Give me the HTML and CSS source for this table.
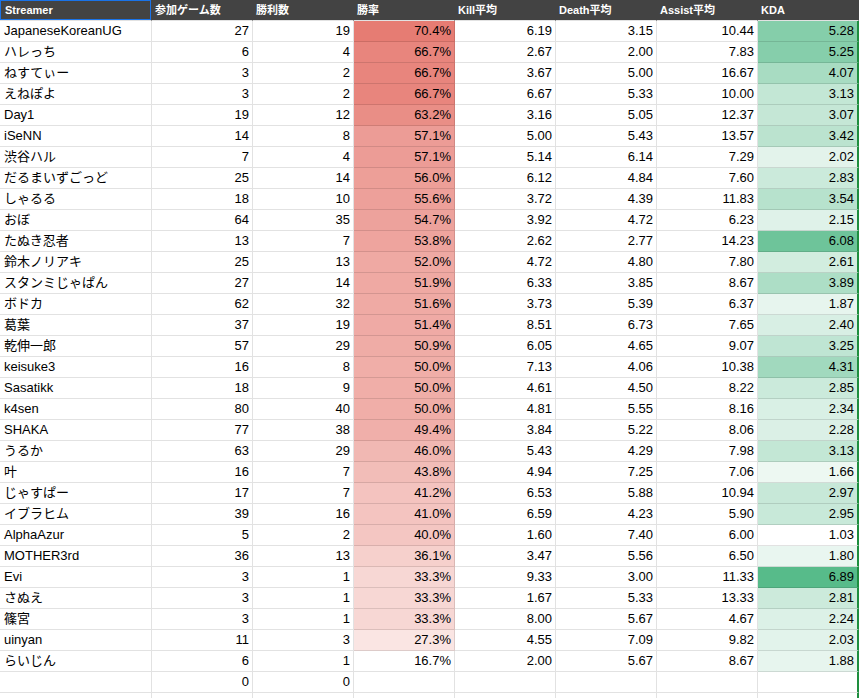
FILE: index.html
```html
<!DOCTYPE html>
<html lang="ja">
<head>
<meta charset="utf-8">
<title>Streamer stats</title>
<link rel="stylesheet" href="styles.css">
</head>
<body>
<div class="sheet">
  <div class="row head">
    <div class="c t sel">Streamer</div>
    <div class="c t">参加ゲーム数</div>
    <div class="c t">勝利数</div>
    <div class="c t">勝率</div>
    <div class="c t">Kill平均</div>
    <div class="c t">Death平均</div>
    <div class="c t">Assist平均</div>
    <div class="c t last">KDA</div>
  </div>
  <div class="row"><div class="c t">JapaneseKoreanUG</div><div class="c">27</div><div class="c">19</div><div class="c" style="background:rgb(230,124,115)">70.4%</div><div class="c">6.19</div><div class="c">3.15</div><div class="c">10.44</div><div class="c last" style="background:rgb(133,206,170)">5.28</div></div>
  <div class="row"><div class="c t">ハレっち</div><div class="c">6</div><div class="c">4</div><div class="c" style="background:rgb(232,133,125)">66.7%</div><div class="c">2.67</div><div class="c">2.00</div><div class="c">7.83</div><div class="c last" style="background:rgb(134,206,171)">5.25</div></div>
  <div class="row"><div class="c t">ねすてぃー</div><div class="c">3</div><div class="c">2</div><div class="c" style="background:rgb(232,133,125)">66.7%</div><div class="c">3.67</div><div class="c">5.00</div><div class="c">16.67</div><div class="c last" style="background:rgb(168,220,194)">4.07</div></div>
  <div class="row"><div class="c t">えねぽよ</div><div class="c">3</div><div class="c">2</div><div class="c" style="background:rgb(232,133,125)">66.7%</div><div class="c">6.67</div><div class="c">5.33</div><div class="c">10.00</div><div class="c last" style="background:rgb(195,231,213)">3.13</div></div>
  <div class="row"><div class="c t">Day1</div><div class="c">19</div><div class="c">12</div><div class="c" style="background:rgb(233,142,134)">63.2%</div><div class="c">3.16</div><div class="c">5.05</div><div class="c">12.37</div><div class="c last" style="background:rgb(197,231,214)">3.07</div></div>
  <div class="row"><div class="c t">iSeNN</div><div class="c">14</div><div class="c">8</div><div class="c" style="background:rgb(236,156,150)">57.1%</div><div class="c">5.00</div><div class="c">5.43</div><div class="c">13.57</div><div class="c last" style="background:rgb(187,227,207)">3.42</div></div>
  <div class="row"><div class="c t">渋谷ハル</div><div class="c">7</div><div class="c">4</div><div class="c" style="background:rgb(236,156,150)">57.1%</div><div class="c">5.14</div><div class="c">6.14</div><div class="c">7.29</div><div class="c last" style="background:rgb(227,243,235)">2.02</div></div>
  <div class="row"><div class="c t">だるまいずごっど</div><div class="c">25</div><div class="c">14</div><div class="c" style="background:rgb(237,159,152)">56.0%</div><div class="c">6.12</div><div class="c">4.84</div><div class="c">7.60</div><div class="c last" style="background:rgb(203,234,219)">2.83</div></div>
  <div class="row"><div class="c t">しゃるる</div><div class="c">18</div><div class="c">10</div><div class="c" style="background:rgb(237,160,154)">55.6%</div><div class="c">3.72</div><div class="c">4.39</div><div class="c">11.83</div><div class="c last" style="background:rgb(183,226,205)">3.54</div></div>
  <div class="row"><div class="c t">おぼ</div><div class="c">64</div><div class="c">35</div><div class="c" style="background:rgb(237,162,156)">54.7%</div><div class="c">3.92</div><div class="c">4.72</div><div class="c">6.23</div><div class="c last" style="background:rgb(223,242,233)">2.15</div></div>
  <div class="row"><div class="c t">たぬき忍者</div><div class="c">13</div><div class="c">7</div><div class="c" style="background:rgb(238,164,158)">53.8%</div><div class="c">2.62</div><div class="c">2.77</div><div class="c">14.23</div><div class="c last" style="background:rgb(110,196,154)">6.08</div></div>
  <div class="row"><div class="c t">鈴木ノリアキ</div><div class="c">25</div><div class="c">13</div><div class="c" style="background:rgb(239,169,163)">52.0%</div><div class="c">4.72</div><div class="c">4.80</div><div class="c">7.80</div><div class="c last" style="background:rgb(210,237,223)">2.61</div></div>
  <div class="row"><div class="c t">スタンミじゃぱん</div><div class="c">27</div><div class="c">14</div><div class="c" style="background:rgb(239,169,163)">51.9%</div><div class="c">6.33</div><div class="c">3.85</div><div class="c">8.67</div><div class="c last" style="background:rgb(173,222,198)">3.89</div></div>
  <div class="row"><div class="c t">ボドカ</div><div class="c">62</div><div class="c">32</div><div class="c" style="background:rgb(239,170,164)">51.6%</div><div class="c">3.73</div><div class="c">5.39</div><div class="c">6.37</div><div class="c last" style="background:rgb(231,245,238)">1.87</div></div>
  <div class="row"><div class="c t">葛葉</div><div class="c">37</div><div class="c">19</div><div class="c" style="background:rgb(239,170,165)">51.4%</div><div class="c">8.51</div><div class="c">6.73</div><div class="c">7.65</div><div class="c last" style="background:rgb(216,239,228)">2.40</div></div>
  <div class="row"><div class="c t">乾伸一郎</div><div class="c">57</div><div class="c">29</div><div class="c" style="background:rgb(239,172,166)">50.9%</div><div class="c">6.05</div><div class="c">4.65</div><div class="c">9.07</div><div class="c last" style="background:rgb(191,229,211)">3.25</div></div>
  <div class="row"><div class="c t">keisuke3</div><div class="c">16</div><div class="c">8</div><div class="c" style="background:rgb(240,174,168)">50.0%</div><div class="c">7.13</div><div class="c">4.06</div><div class="c">10.38</div><div class="c last" style="background:rgb(161,217,190)">4.31</div></div>
  <div class="row"><div class="c t">Sasatikk</div><div class="c">18</div><div class="c">9</div><div class="c" style="background:rgb(240,174,168)">50.0%</div><div class="c">4.61</div><div class="c">4.50</div><div class="c">8.22</div><div class="c last" style="background:rgb(203,234,219)">2.85</div></div>
  <div class="row"><div class="c t">k4sen</div><div class="c">80</div><div class="c">40</div><div class="c" style="background:rgb(240,174,168)">50.0%</div><div class="c">4.81</div><div class="c">5.55</div><div class="c">8.16</div><div class="c last" style="background:rgb(217,240,229)">2.34</div></div>
  <div class="row"><div class="c t">SHAKA</div><div class="c">77</div><div class="c">38</div><div class="c" style="background:rgb(240,175,170)">49.4%</div><div class="c">3.84</div><div class="c">5.22</div><div class="c">8.06</div><div class="c last" style="background:rgb(219,240,230)">2.28</div></div>
  <div class="row"><div class="c t">うるか</div><div class="c">63</div><div class="c">29</div><div class="c" style="background:rgb(241,184,179)">46.0%</div><div class="c">5.43</div><div class="c">4.29</div><div class="c">7.98</div><div class="c last" style="background:rgb(195,231,213)">3.13</div></div>
  <div class="row"><div class="c t">叶</div><div class="c">16</div><div class="c">7</div><div class="c" style="background:rgb(242,189,184)">43.8%</div><div class="c">4.94</div><div class="c">7.25</div><div class="c">7.06</div><div class="c last" style="background:rgb(237,248,242)">1.66</div></div>
  <div class="row"><div class="c t">じゃすぱー</div><div class="c">17</div><div class="c">7</div><div class="c" style="background:rgb(244,195,191)">41.2%</div><div class="c">6.53</div><div class="c">5.88</div><div class="c">10.94</div><div class="c last" style="background:rgb(199,232,216)">2.97</div></div>
  <div class="row"><div class="c t">イブラヒム</div><div class="c">39</div><div class="c">16</div><div class="c" style="background:rgb(244,196,192)">41.0%</div><div class="c">6.59</div><div class="c">4.23</div><div class="c">5.90</div><div class="c last" style="background:rgb(200,233,217)">2.95</div></div>
  <div class="row"><div class="c t">AlphaAzur</div><div class="c">5</div><div class="c">2</div><div class="c" style="background:rgb(244,198,194)">40.0%</div><div class="c">1.60</div><div class="c">7.40</div><div class="c">6.00</div><div class="c last">1.03</div></div>
  <div class="row"><div class="c t">MOTHER3rd</div><div class="c">36</div><div class="c">13</div><div class="c" style="background:rgb(246,208,204)">36.1%</div><div class="c">3.47</div><div class="c">5.56</div><div class="c">6.50</div><div class="c last" style="background:rgb(233,246,240)">1.80</div></div>
  <div class="row"><div class="c t">Evi</div><div class="c">3</div><div class="c">1</div><div class="c" style="background:rgb(247,215,212)">33.3%</div><div class="c">9.33</div><div class="c">3.00</div><div class="c">11.33</div><div class="c last" style="background:rgb(87,187,138)">6.89</div></div>
  <div class="row"><div class="c t">さぬえ</div><div class="c">3</div><div class="c">1</div><div class="c" style="background:rgb(247,215,212)">33.3%</div><div class="c">1.67</div><div class="c">5.33</div><div class="c">13.33</div><div class="c last" style="background:rgb(204,234,219)">2.81</div></div>
  <div class="row"><div class="c t">篠宮</div><div class="c">3</div><div class="c">1</div><div class="c" style="background:rgb(247,215,212)">33.3%</div><div class="c">8.00</div><div class="c">5.67</div><div class="c">4.67</div><div class="c last" style="background:rgb(220,241,231)">2.24</div></div>
  <div class="row"><div class="c t">uinyan</div><div class="c">11</div><div class="c">3</div><div class="c" style="background:rgb(250,229,227)">27.3%</div><div class="c">4.55</div><div class="c">7.09</div><div class="c">9.82</div><div class="c last" style="background:rgb(226,243,235)">2.03</div></div>
  <div class="row"><div class="c t">らいじん</div><div class="c">6</div><div class="c">1</div><div class="c">16.7%</div><div class="c">2.00</div><div class="c">5.67</div><div class="c">8.67</div><div class="c last" style="background:rgb(231,245,238)">1.88</div></div>
  <div class="row"><div class="c t"></div><div class="c">0</div><div class="c">0</div><div class="c"></div><div class="c"></div><div class="c"></div><div class="c"></div><div class="c last"></div></div>
  <div class="row"><div class="c t"></div><div class="c"></div><div class="c"></div><div class="c"></div><div class="c"></div><div class="c"></div><div class="c"></div><div class="c last"></div></div>
</div>
</body>
</html>
```
FILE: styles.css
```css
html, body {
  margin: 0;
  padding: 0;
  background: #fff;
  overflow: hidden;
}

.sheet {
  width: 859px;
  height: 698px;
  overflow: hidden;
  font-family: "Liberation Sans", Arial, "Noto Sans CJK JP", sans-serif;
  font-size: 13px;
  color: #000;
}

.row {
  display: grid;
  grid-template-columns: 152px repeat(7, 101px);
  height: 21px;
}

.c {
  box-sizing: border-box;
  height: 21px;
  line-height: 20px;
  padding: 0 3px 0 3px;
  text-align: right;
  white-space: nowrap;
  overflow: hidden;
  border-right: 1px solid rgba(0, 0, 0, 0.115);
  border-bottom: 1px solid rgba(0, 0, 0, 0.115);
}

.c.t {
  text-align: left;
  padding-left: 4px;
}

.c.last {
  border-right: 2px solid #1e8e3e;
}

.head .c {
  background: #434343;
  background-clip: padding-box;
  color: #fff;
  font-size: 11px;
  font-weight: bold;
  padding-left: 3px;
  line-height: 21px;
  border-right-color: #434343;
}

.head .c.last {
  border-right: 1px solid #434343;
}

.head .c.sel {
  position: relative;
  padding-left: 5px;
}

.head .c.sel::after {
  content: "";
  position: absolute;
  left: -1px;
  top: -1px;
  width: 153px;
  height: 22px;
  box-sizing: border-box;
  border: 2px solid #1a73e8;
}
```
